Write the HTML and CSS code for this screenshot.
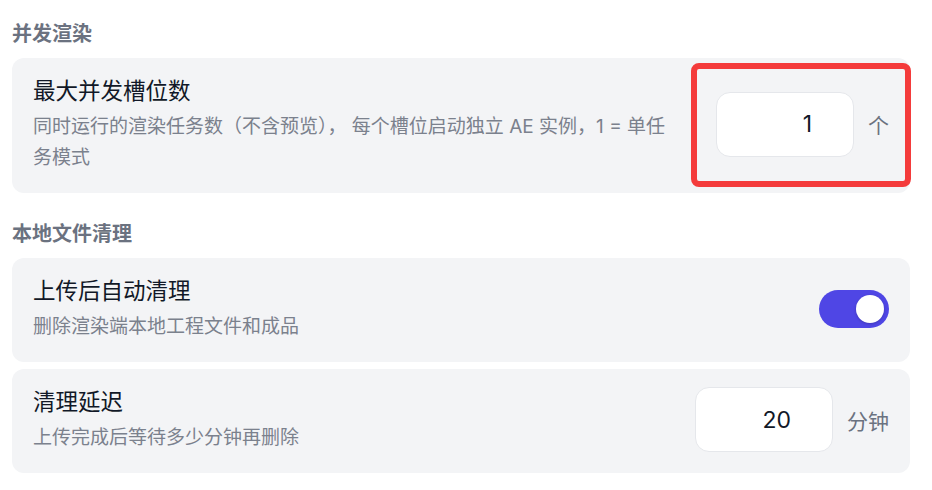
FILE: index.html
```html
<!DOCTYPE html>
<html lang="zh-CN">
<head>
    <meta charset="UTF-8">
    <meta name="viewport" content="width=device-width, initial-scale=1.0">
    <title>渲染设置</title>
    <link rel="stylesheet" href="styles.css">
</head>
<body>
    <div class="settings">
        <h2 class="section-title">并发渲染</h2>
        <div class="card">
            <div class="card-text">
                <div class="card-title">最大并发槽位数</div>
                <div class="card-desc">同时运行的渲染任务数（不含预览）， 每个槽位启动独立 AE 实例，1 = 单任务模式</div>
            </div>
            <div class="control highlight">
                <input class="num-input" type="text" value="1">
                <span class="unit">个</span>
            </div>
        </div>

        <h2 class="section-title">本地文件清理</h2>
        <div class="card">
            <div class="card-text">
                <div class="card-title">上传后自动清理</div>
                <div class="card-desc">删除渲染端本地工程文件和成品</div>
            </div>
            <div class="control">
                <label class="toggle">
                    <input type="checkbox" checked>
                    <span class="slider"></span>
                </label>
            </div>
        </div>
        <div class="card">
            <div class="card-text">
                <div class="card-title">清理延迟</div>
                <div class="card-desc">上传完成后等待多少分钟再删除</div>
            </div>
            <div class="control">
                <input class="num-input" type="text" value="20">
                <span class="unit">分钟</span>
            </div>
        </div>
    </div>
</body>
</html>
```

FILE: styles.css
```css
body {
    margin: 0;
    background-color: #fff;
    font-family: Inter, "Noto Sans CJK SC", sans-serif;
    color: #111827;
}

.settings {
    width: 898px;
    padding: 20px 0 0 12px;
}

.section-title {
    margin: 0 0 10px;
    font-size: 20px;
    line-height: 28px;
    font-weight: bold;
    color: #6b7280;
}

.card + .section-title {
    margin-top: 27px;
}

.card {
    display: flex;
    align-items: center;
    gap: 38px;
    padding: 17px 21px 20px;
    background-color: #f3f4f6;
    border-radius: 12px;
}

.card + .card {
    margin-top: 7px;
}

.card-text {
    flex: 1;
}

.card-title {
    margin-bottom: 4px;
    font-size: 22.5px;
    line-height: 32px;
    color: #111827;
}

.card-desc {
    font-size: 19px;
    line-height: 31px;
    color: #7b818d;
}

.control {
    display: flex;
    align-items: center;
    gap: 14px;
}

.highlight {
    position: relative;
}

/* red marker drawn over the control */
.highlight::after {
    content: "";
    position: absolute;
    top: -29px;
    bottom: -30px;
    left: -25px;
    right: -22px;
    border: 6px solid #f43b3b;
    border-radius: 8px;
    pointer-events: none;
}

.num-input {
    box-sizing: border-box;
    width: 138px;
    height: 65px;
    padding: 0 41px 0 10px;
    border: 1px solid #e5e7eb;
    border-radius: 14px;
    background-color: #fff;
    font-family: Inter, "Noto Sans CJK SC", sans-serif;
    font-size: 23px;
    color: #111827;
    text-align: right;
    outline: none;
}

.unit {
    font-size: 21px;
    color: #6b7280;
}

.toggle {
    position: relative;
    display: inline-block;
    width: 70px;
    height: 38px;
}

.toggle input {
    display: none;
}

.slider {
    position: absolute;
    inset: 0;
    background-color: #d1d5db;
    border-radius: 19px;
    cursor: pointer;
}

.slider::before {
    content: "";
    position: absolute;
    top: 5px;
    left: 5px;
    width: 28px;
    height: 28px;
    background-color: #fff;
    border-radius: 50%;
    box-shadow: 0 1px 3px rgba(0, 0, 0, 0.2);
}

.toggle input:checked + .slider {
    background-color: #4f46e5;
}

.toggle input:checked + .slider::before {
    left: 37px;
}
```
